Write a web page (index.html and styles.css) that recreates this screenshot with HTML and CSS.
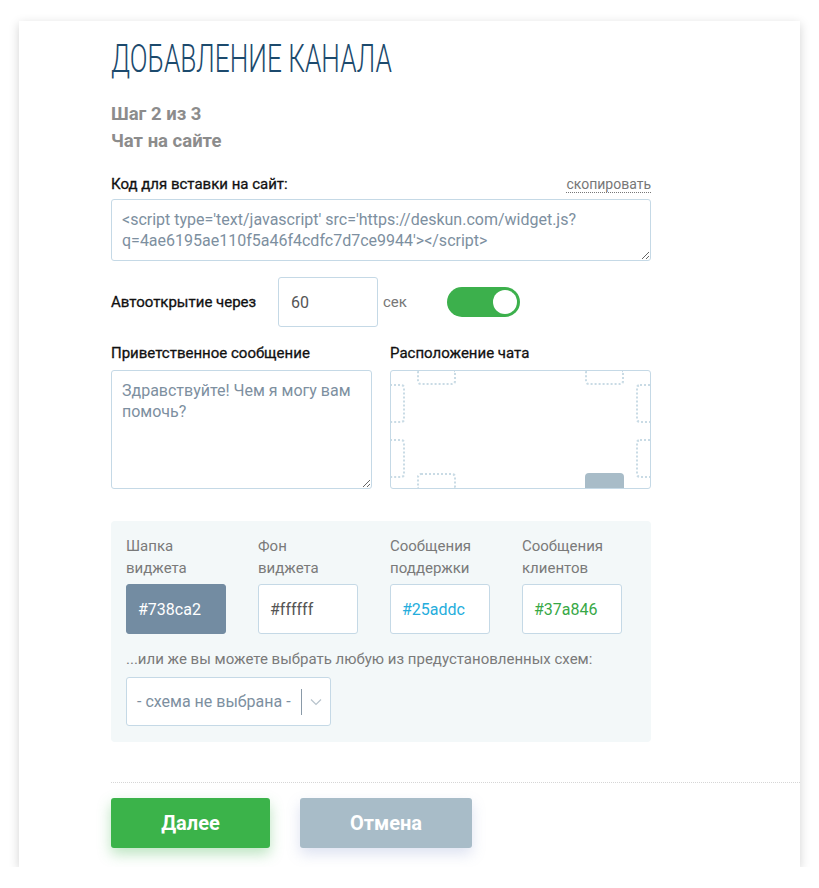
FILE: index.html
```html
<!DOCTYPE html>
<html lang="ru">
<head>
  <meta charset="UTF-8" />
  <title>Добавление канала</title>
  <link rel="stylesheet" href="styles.css">
</head>
<body>
  <div class="card">
    <div class="content">
      <h1 class="title">Добавление канала</h1>

      <div class="step">Шаг 2 из 3</div>
      <div class="step">Чат на сайте</div>

      <!-- Embed code -->
      <div class="label-row">
        <span class="label">Код для вставки на сайт:</span>
        <a class="copy" href="#">скопировать</a>
      </div>
      <textarea class="code" rows="2">&lt;script type='text/javascript' src='https://deskun.com/widget.js?q=4ae6195ae110f5a46f4cdfc7d7ce9944'&gt;&lt;/script&gt;</textarea>

      <!-- Auto open -->
      <div class="auto-row">
        <span class="label auto-label">Автооткрытие через</span>
        <input class="sec-input" type="text" value="60" />
        <span class="sec">сек</span>
        <div class="toggle"><span class="knob"></span></div>
      </div>

      <!-- Greeting + position -->
      <div class="two-cols">
        <div class="col">
          <div class="label">Приветственное сообщение</div>
          <textarea class="greeting">Здравствуйте! Чем я могу вам помочь?</textarea>
        </div>
        <div class="col">
          <div class="label">Расположение чата</div>
          <div class="position">
            <span class="slot top" style="left: 26px"></span>
            <span class="slot top" style="left: 194px"></span>
            <span class="slot side-l" style="top: 13px"></span>
            <span class="slot side-l" style="top: 68px"></span>
            <span class="slot side-r" style="top: 13px"></span>
            <span class="slot side-r" style="top: 68px"></span>
            <span class="slot bottom" style="left: 26px"></span>
            <span class="slot bottom active" style="left: 194px"></span>
          </div>
        </div>
      </div>

      <!-- Colors -->
      <div class="colors">
        <div class="color-grid">
          <div class="color-item">
            <div class="color-label">Шапка<br>виджета</div>
            <input class="color-input head" type="text" value="#738ca2" />
          </div>
          <div class="color-item">
            <div class="color-label">Фон<br>виджета</div>
            <input class="color-input bg" type="text" value="#ffffff" />
          </div>
          <div class="color-item">
            <div class="color-label">Сообщения<br>поддержки</div>
            <input class="color-input support" type="text" value="#25addc" />
          </div>
          <div class="color-item">
            <div class="color-label">Сообщения<br>клиентов</div>
            <input class="color-input client" type="text" value="#37a846" />
          </div>
        </div>
        <div class="scheme-note">...или же вы можете выбрать любую из предустановленных схем:</div>
        <div class="select">
          <span class="select-text">- схема не выбрана -</span>
          <span class="select-sep"></span>
          <svg class="chevron" width="12" height="8" viewBox="0 0 12 8"><path d="M1 1.5 L6 6.5 L11 1.5" fill="none" stroke="#b7c3cc" stroke-width="1.2"/></svg>
        </div>
      </div>
    </div>

    <div class="footer">
      <button class="btn btn-next">Далее</button>
      <button class="btn btn-cancel">Отмена</button>
    </div>
  </div>
</body>
</html>
```

FILE: styles.css
```css
body {
  margin: 0;
  background: #fff;
  font-family: Roboto, "Noto Sans", Arial, sans-serif;
}

.card {
  margin: 21px 0 0 19px;
  width: 781px;
  height: 846px;
  background: #fff;
  box-shadow: 0 3px 10px rgba(0, 0, 0, 0.18);
}

.content {
  padding: 0 0 0 92px;
  width: 540px;
}

.title {
  margin: 0;
  padding-top: 16px;
  font-size: 38px;
  font-weight: 300;
  line-height: 44px;
  color: #1c4a6d;
  text-transform: uppercase;
  white-space: nowrap;
  transform: scaleX(0.69);
  transform-origin: left;
}

.step {
  font-size: 18.5px;
  font-weight: 700;
  color: #8c8c8c;
  line-height: 27px;
}

.title + .step {
  margin-top: 20px;
}

.label-row {
  display: flex;
  justify-content: space-between;
  align-items: baseline;
  margin-top: 20px;
  margin-bottom: 6px;
}

.label {
  font-size: 15px;
  font-weight: 400;
  color: #111;
  -webkit-text-stroke: 0.3px #111;
}

.copy {
  font-size: 14px;
  color: #777;
  text-decoration: none;
  border-bottom: 1px dotted #777;
}

textarea,
input {
  font-family: Roboto, "Noto Sans", Arial, sans-serif;
  box-sizing: border-box;
  border: 1px solid #c5d9e6;
  border-radius: 3px;
  color: #7d8fa0;
  outline: none;
}

.code {
  display: block;
  width: 540px;
  height: 62px;
  padding: 9px 10px;
  font-size: 16px;
  line-height: 21px;
  resize: vertical;
}

.auto-row {
  display: flex;
  align-items: center;
  margin-top: 16px;
}

.auto-label {
  width: 167px;
}

.sec-input {
  width: 100px;
  height: 50px;
  padding: 0 12px;
  font-size: 16px;
  color: #555;
}

.sec {
  margin-left: 5px;
  font-size: 15px;
  color: #777;
}

.toggle {
  position: relative;
  margin-left: 40px;
  width: 73px;
  height: 30px;
  border-radius: 15px;
  background: #3cb04c;
}

.knob {
  position: absolute;
  right: 3px;
  top: 3px;
  width: 24px;
  height: 24px;
  border-radius: 50%;
  background: #fff;
}

.two-cols {
  display: flex;
  gap: 18px;
  margin-top: 17px;
}

.col {
  width: 261px;
}

.col .label {
  margin-bottom: 8px;
}

.greeting {
  display: block;
  width: 261px;
  height: 119px;
  padding: 9px 10px;
  font-size: 16px;
  line-height: 21px;
}

.position {
  position: relative;
  box-sizing: border-box;
  width: 261px;
  height: 119px;
  border: 1px solid #c5d9e6;
  border-radius: 3px;
  overflow: hidden;
}

.slot {
  position: absolute;
  box-sizing: border-box;
  border: 2px dotted #c9dbe5;
}

.slot.top {
  top: -1px;
  width: 39px;
  height: 15px;
  border-top: none;
  border-radius: 0 0 4px 4px;
}

.slot.bottom {
  bottom: -1px;
  width: 39px;
  height: 16px;
  border-bottom: none;
  border-radius: 4px 4px 0 0;
}

.slot.side-l {
  left: -1px;
  width: 15px;
  height: 39px;
  border-left: none;
  border-radius: 0 4px 4px 0;
}

.slot.side-r {
  right: -1px;
  width: 15px;
  height: 39px;
  border-right: none;
  border-radius: 4px 0 0 4px;
}

.slot.active {
  border: none;
  background: #a8bcc8;
}

.colors {
  margin-top: 32px;
  padding: 14px 15px 16px;
  background: #f3f8f9;
  border-radius: 4px;
}

.color-grid {
  display: flex;
  gap: 32px;
}

.color-item {
  width: 100px;
}

.color-label {
  font-size: 15px;
  line-height: 22px;
  color: #7a7a7a;
  margin-bottom: 5px;
}

.color-input {
  width: 100px;
  height: 50px;
  padding: 0 11px;
  font-size: 16px;
  background: #fff;
}

.color-input.head {
  background: #738ca2;
  border-color: #738ca2;
  color: #fff;
}

.color-input.bg {
  color: #555;
}

.color-input.support {
  color: #25addc;
}

.color-input.client {
  color: #37a846;
}

.scheme-note {
  margin-top: 16px;
  font-size: 15px;
  color: #7a7a7a;
}

.select {
  display: flex;
  align-items: center;
  margin-top: 9px;
  width: 205px;
  height: 49px;
  box-sizing: border-box;
  border: 1px solid #c5d9e6;
  border-radius: 3px;
  background: #fff;
  padding-left: 10px;
}

.select-text {
  font-size: 16px;
  color: #7d8fa0;
}

.select-sep {
  width: 1px;
  height: 26px;
  margin-left: 10px;
  background: #8a9aa8;
}

.chevron {
  margin-left: 8px;
}

.footer {
  margin: 40px 0 0 92px;
  padding-top: 15px;
  border-top: 1px dotted #d6d6d6;
}

.btn {
  height: 50px;
  border: none;
  border-radius: 3px;
  color: #fff;
  font-family: Roboto, "Noto Sans", Arial, sans-serif;
  font-size: 20px;
  font-weight: 700;
  cursor: pointer;
}

.btn-next {
  width: 159px;
  background: #3bb34a;
  box-shadow: 0 6px 14px rgba(59, 179, 74, 0.35);
}

.btn-cancel {
  margin-left: 26px;
  width: 172px;
  background: #a8bcc8;
  box-shadow: 0 6px 14px rgba(120, 140, 200, 0.25);
}
```
